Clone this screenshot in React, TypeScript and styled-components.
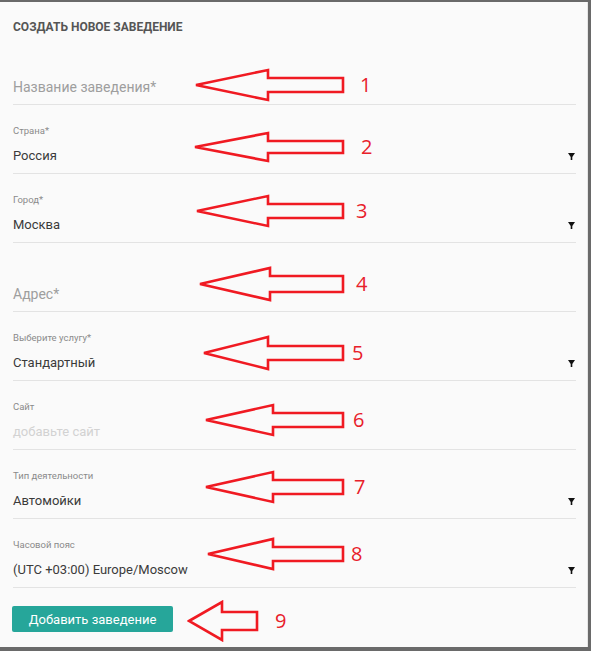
import styled, { createGlobalStyle } from 'styled-components'

const GlobalStyle = createGlobalStyle`
  html, body {
    margin: 0;
    padding: 0;
    background: #6a6a6a;
  }
  body {
    font-family: Roboto, "Liberation Sans", Arial, sans-serif;
  }
`

type Field = {
  label?: string
  value?: string
  placeholder?: string
  select?: boolean
  faint?: boolean
}

const fields: Field[] = [
  { placeholder: 'Название заведения*' },
  { label: 'Страна*', value: 'Россия', select: true },
  { label: 'Город*', value: 'Москва', select: true },
  { placeholder: 'Адрес*' },
  { label: 'Выберите услугу*', value: 'Стандартный', select: true },
  { label: 'Сайт', placeholder: 'добавьте сайт', faint: true },
  { label: 'Тип деятельности', value: 'Автомойки', select: true },
  { label: 'Часовой пояс', value: '(UTC +03:00) Europe/Moscow', select: true },
]

// red annotation arrows drawn over the form
type Mark = {
  n: number
  x: number
  y: number
  len: number
  head: number
  headHalf: number
  shaftHalf: number
  numX: number
}

const marks: Mark[] = [
  { n: 1, x: 196, y: 83, len: 147, head: 72, headHalf: 15, shaftHalf: 7, numX: 360 },
  { n: 2, x: 195, y: 145, len: 148, head: 73, headHalf: 14, shaftHalf: 6, numX: 361 },
  { n: 3, x: 197, y: 209, len: 146, head: 71, headHalf: 15, shaftHalf: 7, numX: 356 },
  { n: 4, x: 200, y: 282, len: 143, head: 70, headHalf: 16, shaftHalf: 8, numX: 356 },
  { n: 5, x: 204, y: 351, len: 139, head: 64, headHalf: 16, shaftHalf: 7, numX: 352 },
  { n: 6, x: 206, y: 418, len: 137, head: 67, headHalf: 15, shaftHalf: 7, numX: 353 },
  { n: 7, x: 206, y: 485, len: 137, head: 67, headHalf: 15, shaftHalf: 7, numX: 354 },
  { n: 8, x: 208, y: 552, len: 135, head: 65, headHalf: 15, shaftHalf: 7, numX: 351 },
  { n: 9, x: 189, y: 619, len: 68, head: 33, headHalf: 19, shaftHalf: 9, numX: 275 },
]

const Arrow = ({ m }: { m: Mark }) => {
  const w = m.len + 4
  const h = m.headHalf * 2 + 4
  const cy = h / 2
  const pts = [
    [2, cy],
    [2 + m.head, cy - m.headHalf],
    [2 + m.head, cy - m.shaftHalf],
    [2 + m.len, cy - m.shaftHalf],
    [2 + m.len, cy + m.shaftHalf],
    [2 + m.head, cy + m.shaftHalf],
    [2 + m.head, cy + m.headHalf],
  ]
    .map((p) => p.join(','))
    .join(' ')
  return (
    <>
      <ArrowSvg
        width={w}
        height={h}
        style={{ left: m.x - 2, top: m.y - cy }}
        viewBox={`0 0 ${w} ${h}`}
      >
        <polygon points={pts} fill="none" stroke="#f01a22" strokeWidth="2.6" strokeLinejoin="miter" />
      </ArrowSvg>
      <MarkNum style={{ left: m.numX, top: m.y - 13 }}>{m.n}</MarkNum>
    </>
  )
}

const Caret = () => (
  <svg width="7" height="7" viewBox="0 0 7 7">
    <path d="M0 0H7L4.3 4V7H2.7V4Z" fill="#111" />
  </svg>
)

export default function App() {
  return (
    <>
      <GlobalStyle />
      <Frame>
        <Panel>
          <Title>Создать новое заведение</Title>
          {fields.map((f, i) => (
            <FieldRow key={i}>
              <Label>{f.label ?? ''}</Label>
              <ValueLine>
                {f.value ? (
                  <Value>{f.value}</Value>
                ) : (
                  <Placeholder $faint={f.faint} $small={!!f.label}>
                    {f.placeholder}
                  </Placeholder>
                )}
                {f.select && <Caret />}
              </ValueLine>
            </FieldRow>
          ))}
          <SubmitButton>Добавить заведение</SubmitButton>
          {marks.map((m) => (
            <Arrow key={m.n} m={m} />
          ))}
        </Panel>
      </Frame>
    </>
  )
}

const Frame = styled.div`
  width: 591px;
  height: 651px;
  padding-top: 2px;
  box-sizing: border-box;
  background: #6a6a6a;
`

const Panel = styled.div`
  position: relative;
  width: 588px;
  height: 645px;
  box-sizing: border-box;
  padding: 0 11px 0 13px;
  background: #fafafa;
  border-right: 1px solid #e6e6e6;
`

const Title = styled.div`
  height: 34px;
  padding-top: 17px;
  box-sizing: border-box;
  font-size: 12px;
  line-height: 16px;
  font-weight: 700;
  text-transform: uppercase;
  color: #555;
`

const FieldRow = styled.div`
  height: 69px;
  box-sizing: border-box;
  padding-top: 20px;
  border-bottom: 1px solid #e3e3e3;
`

const Label = styled.div`
  height: 12px;
  font-size: 9.5px;
  line-height: 12px;
  color: #8a8a8a;
`

const ValueLine = styled.div`
  display: flex;
  align-items: center;
  justify-content: space-between;
  height: 18px;
  margin-top: 10px;
  padding-right: 1px;
`

const Value = styled.span`
  font-size: 13px;
  line-height: 18px;
  color: #3a3a3a;
`

const Placeholder = styled.span<{ $faint?: boolean; $small?: boolean }>`
  font-size: ${(p) => (p.$small ? '13px' : '14px')};
  line-height: 18px;
  color: ${(p) => (p.$faint ? '#d2d2d2' : '#9e9e9e')};
`

const SubmitButton = styled.button`
  display: block;
  margin: 18px 0 0 -1px;
  width: 161px;
  height: 26px;
  border: none;
  border-radius: 2px;
  background: #26a69a;
  color: #fff;
  font-family: Roboto, "Liberation Sans", Arial, sans-serif;
  font-size: 13px;
  padding: 0;
  cursor: pointer;
`

const ArrowSvg = styled.svg`
  position: absolute;
  pointer-events: none;
`

const MarkNum = styled.span`
  position: absolute;
  font-family: "Open Sans", "Liberation Sans", sans-serif;
  font-size: 20px;
  line-height: 26px;
  color: #e8202a;
`
